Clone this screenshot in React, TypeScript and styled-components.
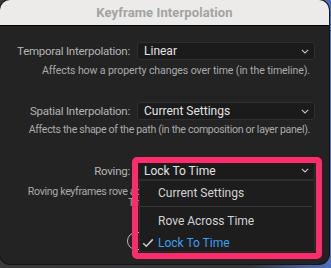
import React from 'react'
import styled, { createGlobalStyle } from 'styled-components'

const GlobalStyle = createGlobalStyle`
  html, body {
    margin: 0;
    padding: 0;
    width: 331px;
    height: 268px;
    overflow: hidden;
    background: linear-gradient(90deg, #3a3a3c 0%, #35363a 75%, #4f72bd 100%);
    font-family: Roboto, "Liberation Sans", sans-serif;
  }
`

const Window = styled.div`
  position: relative;
  width: 329px;
  height: 264px;
  border-radius: 10px;
  overflow: hidden;
  background: #232323;
  box-shadow: 0 0 0 1px #151515;
  display: flex;
  flex-direction: column;
`

const TitleBar = styled.div`
  height: 25px;
  flex: none;
  background: #ecebe9;
  border-bottom: 1px solid #050505;
  display: flex;
  align-items: center;
  justify-content: center;
  font-size: 13px;
  font-weight: 700;
  color: #a3a3a3;
  letter-spacing: 0.1px;
`

const Body = styled.div`
  display: flex;
  flex-direction: column;
  padding-top: 16px;
`

const Row = styled.div<{ gapTop?: number }>`
  display: grid;
  grid-template-columns: 130px 178px;
  column-gap: 7px;
  align-items: center;
  margin-top: ${({ gapTop }) => gapTop ?? 0}px;
`

const Label = styled.div`
  text-align: right;
  font-size: 11.5px;
  color: #b3b3b3;
  letter-spacing: -0.25px;
  white-space: nowrap;
`

const Select = styled.div<{ tall?: boolean }>`
  height: ${({ tall }) => (tall ? 19 : 18)}px;
  box-sizing: border-box;
  background: #1b1b1b;
  border: 1px solid #2f2f2f;
  border-radius: 3px;
  display: flex;
  align-items: center;
  justify-content: space-between;
  padding: 0 5px 0 6px;
  font-size: 12px;
  color: #e2e2e2;
`

const Help = styled.div<{ centered?: boolean; gapTop?: number; tight?: boolean }>`
  font-size: 10.6px;
  line-height: ${({ centered }) => (centered ? 11 : 12)}px;
  color: #aaaaaa;
  letter-spacing: ${({ tight }) => (tight ? -0.32 : -0.12)}px;
  text-align: ${({ centered }) => (centered ? 'center' : 'right')};
  padding: ${({ centered }) => (centered ? '0' : '0 19px 0 0')};
  margin-top: ${({ gapTop }) => gapTop ?? 0}px;
  white-space: nowrap;
`

const Buttons = styled.div`
  display: flex;
  justify-content: flex-start;
  gap: 10px;
  margin-top: 24px;
  padding-left: 127px;
`

const PillButton = styled.div`
  height: 18px;
  box-sizing: border-box;
  padding: 0 14px;
  border: 1.5px solid #b9b9b9;
  border-radius: 9px;
  font-size: 11px;
  font-weight: 700;
  color: #d0d0d0;
  display: flex;
  align-items: center;
`

const Highlight = styled.div`
  position: absolute;
  left: 132px;
  top: 157px;
  width: 190px;
  height: 102px;
  box-sizing: border-box;
  border: 6px solid #fe2c6c;
  border-radius: 5px;
  pointer-events: none;
  z-index: 3;
`

const Menu = styled.div`
  position: absolute;
  left: 139px;
  top: 180px;
  width: 176px;
  height: 72px;
  box-sizing: border-box;
  background: #1d1d1d;
  border: 1px solid #2c2c2c;
  z-index: 2;
  padding-top: 1px;
`

const MenuItem = styled.div<{ selected?: boolean }>`
  position: relative;
  height: 22px;
  display: flex;
  align-items: center;
  padding-left: 18px;
  font-size: 12px;
  color: ${({ selected }) => (selected ? '#3d9ef0' : '#d2d2d2')};

  svg {
    position: absolute;
    left: 2px;
    top: 6px;
  }
`

const Separator = styled.div`
  height: 1px;
  background: #363636;
  margin: 2px 2px 3px 0;
`

const Chevron = () => (
  <svg width="8" height="5" viewBox="0 0 8 5">
    <path d="M0.8 0.8 L4 4 L7.2 0.8" fill="none" stroke="#c4c4c4" strokeWidth="1.1" />
  </svg>
)

const Check = () => (
  <svg width="12" height="10" viewBox="0 0 12 10">
    <path d="M1.2 5.2 L4.3 8.2 L10.8 1.4" fill="none" stroke="#c8c8c8" strokeWidth="1.6" />
  </svg>
)

const App: React.FC = () => {
  return (
    <>
      <GlobalStyle />
      <Window>
        <TitleBar>Keyframe Interpolation</TitleBar>
        <Body>
          <Row>
            <Label>Temporal Interpolation:</Label>
            <Select>
              Linear
              <Chevron />
            </Select>
          </Row>
          <Help gapTop={5}>Affects how a property changes over time (in the timeline).</Help>
          <Row gapTop={25}>
            <Label>Spatial Interpolation:</Label>
            <Select>
              Current Settings
              <Chevron />
            </Select>
          </Row>
          <Help gapTop={4} tight>
            Affects the shape of the path (in the composition or layer panel).
          </Help>
          <Row gapTop={25}>
            <Label>Roving:</Label>
            <Select tall>
              Lock To Time
              <Chevron />
            </Select>
          </Row>
          <Help centered tight gapTop={6}>
            Roving keyframes rove across time to smooth speed changes.
            <br />
            Time is auto-set.
          </Help>
          <Buttons>
            <PillButton>Cancel</PillButton>
            <PillButton>OK</PillButton>
          </Buttons>
        </Body>
        <Menu>
          <MenuItem>Current Settings</MenuItem>
          <Separator />
          <MenuItem>Rove Across Time</MenuItem>
          <MenuItem selected>
            <Check />
            Lock To Time
          </MenuItem>
        </Menu>
        <Highlight />
      </Window>
    </>
  )
}

export default App
